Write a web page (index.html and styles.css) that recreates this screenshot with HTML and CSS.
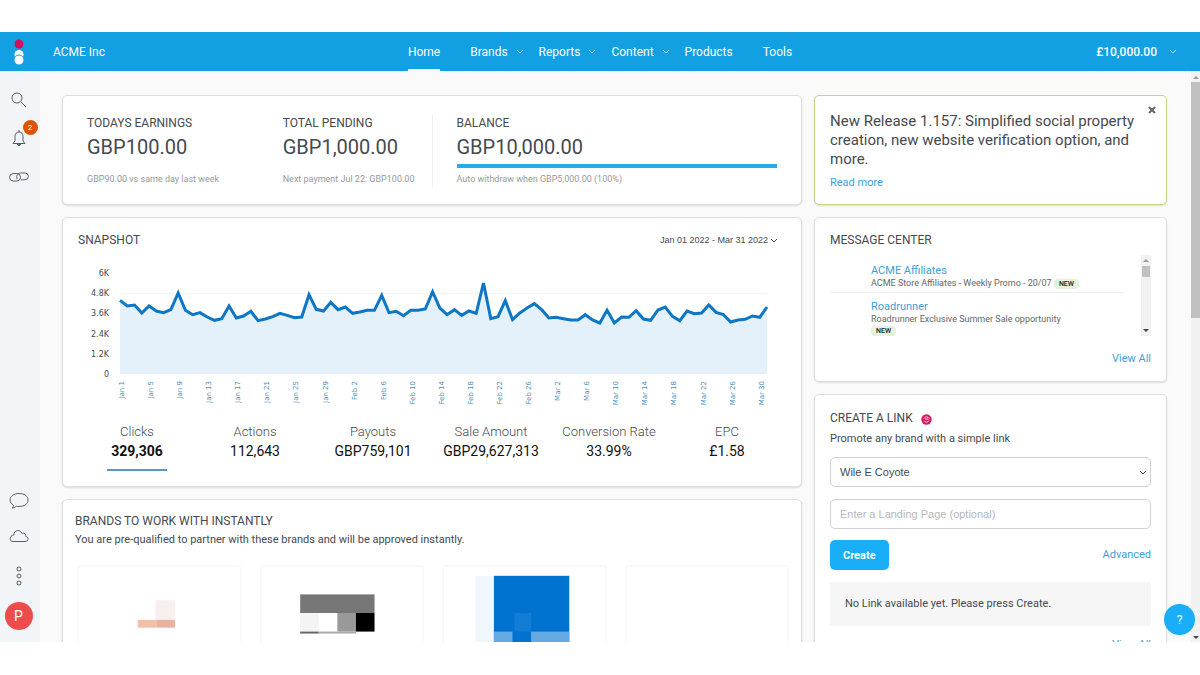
FILE: index.html
```
<!DOCTYPE html>
<html lang="en">
<head>
    <meta charset="UTF-8">
    <meta name="viewport" content="width=device-width, initial-scale=1.0">
    <title>ACME Inc - Home</title>
    <link rel="stylesheet" href="styles.css">
</head>
<body>
    <div class="app">
        <header class="topbar">
            <a href="#" class="logo" aria-label="Home page">
                <svg width="12" height="26" viewBox="0 0 12 26">
                    <circle cx="6" cy="5" r="4.5" fill="#d5105a"/>
                    <circle cx="6" cy="15.500" r="4.500" fill="#fff"/>
                    <circle cx="6" cy="21" r="5" fill="#fff" stroke="#12a0e2"/>
                </svg>
            </a>
            <span class="company">ACME Inc</span>
            <nav class="menu">
                <a href="#" class="active">Home</a>
                <a href="#" class="dropdown">Brands <svg class="chev" viewBox="0 0 8 5"><path d="M1 1l3 3 3-3"/></svg></a>
                <a href="#" class="dropdown">Reports <svg class="chev" viewBox="0 0 8 5"><path d="M1 1l3 3 3-3"/></svg></a>
                <a href="#" class="dropdown">Content <svg class="chev" viewBox="0 0 8 5"><path d="M1 1l3 3 3-3"/></svg></a>
                <a href="#">Products</a>
                <a href="#">Tools</a>
            </nav>
            <button class="funds">£10,000.00 <svg class="chev" viewBox="0 0 8 5"><path d="M1 1l3 3 3-3"/></svg></button>
        </header>

        <div class="body">
            <aside class="sidebar">
                <button aria-label="Search">
                    <svg width="16" height="16" viewBox="0 0 16 16"><circle cx="6" cy="6" r="5"/><path d="M10 10l5 5"/></svg>
                </button>
                <button class="alerts" aria-label="Notifications">
                    <svg width="14" height="18" viewBox="0 0 14 18"><path d="M1 14.500h12L11 12V7.500C11 4.500 9.500 3 7 3S3 4.500 3 7.500V12z"/><path d="M7 3V1"/><path d="M5.500 15a1.500 1.500 0 0 0 3 0z" fill="#55606a"/></svg>
                    <span class="count">2</span>
                </button>
                <button aria-label="Links">
                    <svg width="20" height="10" viewBox="0 0 20 10"><rect x="0.500" y="1.500" width="11" height="7.500" rx="3.700"/><path d="M8 7C7 3.500 9 1 11.500 1H16a3.300 3.300 0 0 1 0 6.800h-4"/></svg>
                </button>
                <button class="chat" aria-label="Chat">
                    <svg width="20" height="18" viewBox="0 0 20 18"><path d="M4.500 13.200C2.400 12 1 10.300 1 8c0-3.900 4-6.500 9-6.500S19 4.100 19 8s-4 6.500-9 6.500c-1 0-2-.1-2.800-.3C6 15.500 4.500 16 3 16c1-.8 1.500-1.700 1.500-2.800z"/></svg>
                </button>
                <button class="cloud" aria-label="Cloud">
                    <svg width="20" height="14" viewBox="0 0 20 14"><path d="M4 12.500h12c4 0 4-4.500.8-5C17 4.500 14.500 3.500 13 4.500 11.500.200 5 .500 4.800 6 .200 6.500 0 12.500 4 12.500z"/></svg>
                </button>
                <button class="more" aria-label="More">
                    <svg width="6" height="20" viewBox="0 0 6 20"><circle cx="3" cy="3" r="2"/><circle cx="3" cy="10" r="2"/><circle cx="3" cy="17" r="2"/></svg>
                </button>
                <button class="avatar">P</button>
            </aside>

            <main class="main">
                <div class="column">
                    <section class="card earnings">
                        <div>
                            <h2>TODAYS EARNINGS</h2>
                            <p class="amount">GBP100.00</p>
                            <p class="note">GBP90.00 vs same day last week</p>
                        </div>
                        <div>
                            <h2>TOTAL PENDING</h2>
                            <p class="amount">GBP1,000.00</p>
                            <p class="note">Next payment Jul 22: GBP100.00</p>
                        </div>
                        <div class="balance">
                            <h2>BALANCE</h2>
                            <p class="amount">GBP10,000.00</p>
                            <div class="bar"></div>
                            <p class="note">Auto withdraw when GBP5,000.00 (100%)</p>
                        </div>
                    </section>

                    <section class="card snapshot">
                        <div class="card-head">
                            <h2>SNAPSHOT</h2>
                            <button class="range">Jan 01 2022 - Mar 31 2022 <svg class="chev" viewBox="0 0 8 5"><path d="M1 1l3 3 3-3"/></svg></button>
                        </div>
                        <div class="chart">
                            <div class="y-axis"><span>6K</span><span>4.8K</span><span>3.6K</span><span>2.4K</span><span>1.2K</span><span>0</span></div>
                            <svg class="plot" viewBox="0 175 89 303" preserveAspectRatio="none">
                                <path class="gridline" d="M0 236H89"/>
                                <path class="area" id="area"/>
                                <path class="line" id="line"/>
                            </svg>
                            <div class="x-axis">
                                <span>Jan 1</span><span>Jan 5</span><span>Jan 9</span><span>Jan 13</span><span>Jan 17</span><span>Jan 21</span><span>Jan 25</span><span>Jan 29</span>
                                <span>Feb 2</span><span>Feb 6</span><span>Feb 10</span><span>Feb 14</span><span>Feb 18</span><span>Feb 22</span><span>Feb 26</span>
                                <span>Mar 2</span><span>Mar 6</span><span>Mar 10</span><span>Mar 14</span><span>Mar 18</span><span>Mar 22</span><span>Mar 26</span><span>Mar 30</span>
                            </div>
                        </div>
                        <div class="stats">
                            <button class="selected">Clicks<b>329,306</b></button>
                            <button>Actions<b>112,643</b></button>
                            <button>Payouts<b>GBP759,101</b></button>
                            <button>Sale Amount<b>GBP29,627,313</b></button>
                            <button>Conversion Rate<b>33.99%</b></button>
                            <button>EPC<b>£1.58</b></button>
                        </div>
                    </section>

                    <section class="card brands">
                        <h2>BRANDS TO WORK WITH INSTANTLY</h2>
                        <p>You are pre-qualified to partner with these brands and will be approved instantly.</p>
                        <div class="tiles">
                            <div class="tile">
                                <svg viewBox="0 0 164 90"><rect x="78" y="34" width="20" height="20" fill="#f8f0ec"/><rect x="60" y="54" width="19" height="8" fill="#f0c0a8"/><rect x="79" y="54" width="19" height="8" fill="#ebb0a0"/></svg>
                            </div>
                            <div class="tile">
                                <svg viewBox="0 0 164 90"><rect x="39" y="28" width="76" height="19" fill="#777"/><rect x="39" y="47" width="19" height="19" fill="#f4f4f4"/><rect x="77" y="47" width="19" height="19" fill="#999"/><rect x="96" y="47" width="19" height="19" fill="#000"/><rect x="39" y="66" width="19" height="2" fill="#666"/><rect x="58" y="66" width="38" height="2" fill="#aaa"/></svg>
                            </div>
                            <div class="tile">
                                <svg viewBox="0 0 164 90"><rect x="32" y="9" width="19" height="81" fill="#eff7fc"/><rect x="51" y="9" width="77" height="81" fill="#0073d1"/><rect x="72" y="47" width="17" height="19" fill="#137dd5"/><rect x="51" y="66" width="19" height="24" fill="#64a9e2"/><rect x="89" y="66" width="39" height="24" fill="#64a9e2"/></svg>
                            </div>
                            <div class="tile"></div>
                        </div>
                    </section>
                </div>

                <div class="column">
                    <section class="card release">
                        <button class="close" aria-label="Close"><svg width="8" height="8" viewBox="0 0 8 8"><path d="M1 1l6 6M7 1L1 7"/></svg></button>
                        <h3>New Release 1.157: Simplified social property creation, new website verification option, and more.</h3>
                        <a href="#">Read more</a>
                    </section>

                    <section class="card messages">
                        <h2>MESSAGE CENTER</h2>
                        <div class="inbox">
                            <ul>
                                <li><a href="#">ACME Affiliates</a><p>ACME Store Affiliates - Weekly Promo - 20/07 <span class="new">NEW</span></p></li>
                                <li><a href="#">Roadrunner</a><p>Roadrunner Exclusive Summer Sale opportunity <span class="new">NEW</span></p></li>
                            </ul>
                            <div class="scrollbar"><i class="up"></i><i class="thumb"></i><i class="down"></i></div>
                        </div>
                        <a href="#" class="view-all">View All</a>
                    </section>

                    <section class="card create">
                        <h2>CREATE A LINK <svg width="11" height="11" viewBox="0 0 11 11"><circle cx="5.500" cy="5.500" r="5.200" fill="#d81b60"/><path d="M3 4.500a2.700 2.700 0 0 1 5 0M8 6.500a2.700 2.700 0 0 1-5 0M4 5h3v1" fill="none" stroke="#f8c4d8"/></svg></h2>
                        <label for="brand">Promote any brand with a simple link</label>
                        <div class="select">
                            <select id="brand"><option>Wile E Coyote</option></select>
                            <svg class="chev" viewBox="0 0 8 5"><path d="M1 1l3 3 3-3"/></svg>
                        </div>
                        <input type="text" placeholder="Enter a Landing Page (optional)" aria-label="Landing page">
                        <div class="actions">
                            <button class="primary">Create</button>
                            <a href="#">Advanced</a>
                        </div>
                        <p class="empty">No Link available yet. Please press Create.</p>
                        <a href="#" class="view-all">View All</a>
                    </section>
                </div>
            </main>
            <div class="scrollbar page"><i class="up"></i><i class="thumb"></i><i class="down"></i></div>
            <button class="help">?</button>
        </div>
    </div>
    <script src="chart.js"></script>
</body>
</html>
```
FILE: styles.css
```
* {
    box-sizing: border-box;
}
body {
    margin: 0;
    padding: 32px 0 33px;
    height: 100vh;
    background: #fff;
    color: #454a50;
    font-family: Roboto, Arial, sans-serif;
    font-size: 11px;
    line-height: 16px;
}
h2, h3, p, ul {
    margin: 0;
    padding: 0;
    font-weight: 400;
}
h2 {
    font-size: 12px;
}
a {
    color: #3c9fdb;
    text-decoration: none;
}
button {
    padding: 0;
    border: 0;
    background: none;
    font-family: inherit;
    color: inherit;
}
.app {
    display: flex;
    flex-direction: column;
    height: 100%;
    overflow: hidden;
}
.chev {
    width: 8px;
    height: 5px;
    fill: none;
    stroke: currentColor;
}

/* top bar */
.topbar {
    display: grid;
    grid-template-columns: 53px 1fr auto 1fr;
    align-items: center;
    flex: none;
    height: 39px;
    padding-right: 23px;
    background: #12a0e2;
    color: #fff;
    font-size: 12px;
}
.logo {
    display: flex;
    padding-left: 13px;
}
.menu {
    display: flex;
    height: 39px;
}
.menu a {
    display: flex;
    align-items: center;
    gap: 8px;
    margin-right: 30px;
    color: #fff;
}
.menu .dropdown {
    margin-right: 15px;
}
.menu .active {
    border-bottom: 2px solid #fff;
    padding-top: 2px;
}
.menu .chev, .funds .chev {
    opacity: 0.7;
}
.funds {
    display: flex;
    align-items: center;
    gap: 12px;
    justify-self: end;
    font-size: 12px;
    font-weight: 500;
}

/* side bar */
.body {
    position: relative;
    display: flex;
    flex: 1;
    min-height: 0;
    background: #fafafa;
}
.sidebar {
    display: flex;
    flex-direction: column;
    align-items: center;
    flex: none;
    width: 40px;
    padding: 21px 3px 12px 0;
    background: #f1f5f8;
}
.sidebar button {
    display: flex;
    position: relative;
    margin-bottom: 21px;
}
.sidebar svg {
    fill: none;
    stroke: #55606a;
}
.sidebar .alerts {
    margin-bottom: 25px;
}
.sidebar .chat {
    margin-top: auto;
    margin-bottom: 19px;
}
.sidebar .cloud {
    margin-bottom: 23px;
}
.sidebar .more {
    margin-bottom: 16px;
}
.count {
    position: absolute;
    top: -9px;
    left: 11px;
    width: 15px;
    border-radius: 8px;
    background: #dc5406;
    color: #fff;
    font-size: 8px;
    line-height: 15px;
    text-align: center;
}
.sidebar .avatar {
    justify-content: center;
    align-items: center;
    width: 28px;
    height: 28px;
    margin: 0;
    border-radius: 50%;
    background: #ee4c4c;
    color: #fff;
    font-size: 14px;
}

/* content */
.main {
    display: grid;
    grid-template-columns: minmax(0, 740fr) minmax(0, 353fr);
    gap: 12px;
    flex: 1;
    align-items: start;
    padding: 24px 24px 0 22px;
    overflow: hidden;
}
.column {
    display: grid;
    gap: 12px;
}
.card {
    padding: 15px;
    border: 1px solid #dfdfdf;
    border-radius: 5px;
    background: #fff;
    box-shadow: 0 1px 2px rgba(0, 0, 0, 0.12);
}

.earnings {
    display: grid;
    grid-template-columns: 196fr 149fr 346fr;
    padding: 19px 24px 17px;
}
.amount {
    font-size: 20px;
    line-height: 32px;
}
.note {
    margin-top: 8px;
    color: #999;
    font-size: 9px;
}
.balance {
    padding-left: 24px;
    border-left: 1px solid #eee;
}
.bar {
    height: 4px;
    margin-top: 1px;
    background: #29aae8;
}
.bar + .note {
    margin-top: 3px;
}

.snapshot {
    padding-top: 14px;
}
.card-head {
    display: flex;
    justify-content: space-between;
    padding-right: 8px;
}
.range {
    display: flex;
    align-items: center;
    gap: 2px;
    font-family: "Liberation Sans", Arial, sans-serif;
    font-size: 9px;
}
.chart {
    display: grid;
    grid-template-columns: 31px 1fr;
    column-gap: 11px;
    margin: 25px 19px 0 0;
    font-family: "DejaVu Sans", Verdana, sans-serif;
}
.y-axis {
    display: flex;
    flex-direction: column;
    justify-content: space-between;
    margin: -4px 0 -6px;
    font-size: 8px;
    line-height: 10px;
    text-align: right;
}
.plot {
    width: 100%;
    height: 101px;
    overflow: visible;
}
.plot path {
    vector-effect: non-scaling-stroke;
}
.gridline {
    stroke: #f3f3f3;
}
.area {
    fill: #e5f1fa;
}
.line {
    fill: none;
    stroke: #0d76c5;
    stroke-width: 3px;
}
.x-axis {
    display: flex;
    justify-content: space-between;
    align-items: flex-start;
    grid-column: 2;
    height: 25px;
    margin: 7px 0 0 -3px;
    color: #4c8fc4;
    font-size: 7px;
    line-height: 10px;
}
.x-axis span {
    writing-mode: vertical-rl;
    transform: rotate(180deg);
    white-space: nowrap;
}
.stats {
    display: grid;
    grid-template-columns: repeat(6, 1fr);
    justify-items: center;
    margin-top: 17px;
}
.stats button {
    min-width: 60px;
    padding-bottom: 8px;
    border-bottom: 2px solid transparent;
    font-size: 13px;
    font-weight: 300;
    line-height: 17px;
}
.stats b {
    display: block;
    margin-top: 1px;
    color: #111;
    font-size: 14px;
    font-weight: 400;
    line-height: 20px;
}
.stats .selected {
    border-color: #5b93cc;
}
.stats .selected b {
    font-weight: 700;
}

.brands {
    padding: 13px 12px;
}
.brands p {
    margin-top: 3px;
}
.tiles {
    display: grid;
    grid-template-columns: repeat(4, 1fr);
    gap: 18px;
    margin: 17px 0 0 2px;
}
.tile {
    border: 2px solid #f9f9f9;
    border-radius: 3px;
}
.tile svg {
    display: block;
    width: 100%;
}

.release {
    position: relative;
    padding: 16px 15px 13px;
    border-color: #bfd98b;
}
.release h3 {
    margin-bottom: 6px;
    font-size: 15px;
    line-height: 19px;
}
.release a {
    display: block;
}
.close {
    position: absolute;
    top: 10px;
    right: 10px;
    display: flex;
}
.close path {
    stroke: #666;
    stroke-width: 2px;
}

.messages {
    padding: 14px 15px;
}
.inbox {
    display: flex;
    justify-content: space-between;
    height: 81px;
    margin: 7px 0 15px;
    overflow: hidden;
}
.inbox ul {
    width: 294px;
    list-style: none;
}
.inbox li {
    padding: 8px 42px 3px 41px;
    border-bottom: 1px solid #eee;
    line-height: 15px;
}
.inbox li + li {
    padding-top: 6px;
}
.inbox p {
    color: #666;
    font-size: 9px;
    line-height: 11px;
}
.new {
    display: inline-block;
    padding: 0 5px;
    border-radius: 4px;
    background: #e3f2d9;
    color: #222;
    font-size: 7px;
    font-weight: 500;
    line-height: 10px;
}
.view-all {
    display: block;
    text-align: right;
}
.scrollbar {
    display: flex;
    flex-direction: column;
    align-items: center;
    width: 10px;
    padding: 4px 0;
    background: #f1f1f1;
}
.scrollbar .up {
    border: 3px solid transparent;
    border-top: 0;
    border-bottom-color: #999;
}
.scrollbar .down {
    margin-top: auto;
    border: 3px solid transparent;
    border-bottom: 0;
    border-top-color: #444;
}
.scrollbar .thumb {
    width: 8px;
    height: 11px;
    margin-top: 4px;
    background: #c1c1c1;
}
.page {
    flex: none;
    width: 9px;
    padding: 5px 0 3px;
}
.page .thumb {
    width: 100%;
    height: 42%;
    margin-top: 3px;
}

.create label {
    display: block;
    margin: 5px 0 10px;
}
.create h2 svg {
    margin-left: 5px;
    vertical-align: -3px;
}
.select {
    position: relative;
    margin-bottom: 12px;
}
.select .chev {
    position: absolute;
    top: 13px;
    right: 4px;
}
.create select, .create input {
    display: block;
    width: 100%;
    height: 30px;
    padding: 0 9px;
    border: 1px solid #d0d3d6;
    border-radius: 5px;
    background: #fff;
    color: #454a50;
    font-family: "Liberation Sans", Arial, sans-serif;
    font-size: 11px;
    appearance: none;
}
.create input::placeholder {
    color: #b5b8bb;
}
.actions {
    display: flex;
    justify-content: space-between;
    align-items: center;
    margin: 11px 0 12px;
}
.primary {
    height: 30px;
    padding: 0 13px;
    border-radius: 5px;
    background: #19aef7;
    color: #fff;
    font-size: 11px;
    font-weight: 700;
}
.empty {
    margin-bottom: 11px;
    padding: 14px 15px;
    background: #f6f6f6;
}
.help {
    position: absolute;
    right: 5px;
    bottom: 7px;
    width: 31px;
    height: 31px;
    border-radius: 50%;
    background: #19aef7;
    color: #fff;
    font-size: 12px;
}
```
FILE: chart.js
```
// one value per day, Jan 1 - Mar 31, as y positions in the plot's viewBox
const days = [
    257, 274, 271, 295, 274, 289, 294, 285, 235, 287, 300, 294, 307, 317, 312, 274,
    310, 304, 290, 318, 313, 306, 296, 302, 309, 307, 240, 284, 289, 263, 285,
    277, 296, 292, 287, 287, 242, 294, 290, 303, 287, 287, 283, 231, 280,
    300, 285, 302, 289, 296, 205, 312, 306, 258, 315, 295, 280, 267, 285,
    310, 308, 312, 316, 316, 300, 316, 325, 287, 325, 307, 308, 288, 313, 317, 286,
    277, 305, 318, 289, 297, 295, 271, 293, 300, 322, 316, 314, 304, 308, 277
];
const points = days.map((y, x) => x + ' ' + y).join('L');

document.getElementById('line').setAttribute('d', 'M' + points);
document.getElementById('area').setAttribute('d', 'M0 478L' + points + 'L89 478Z');
```
